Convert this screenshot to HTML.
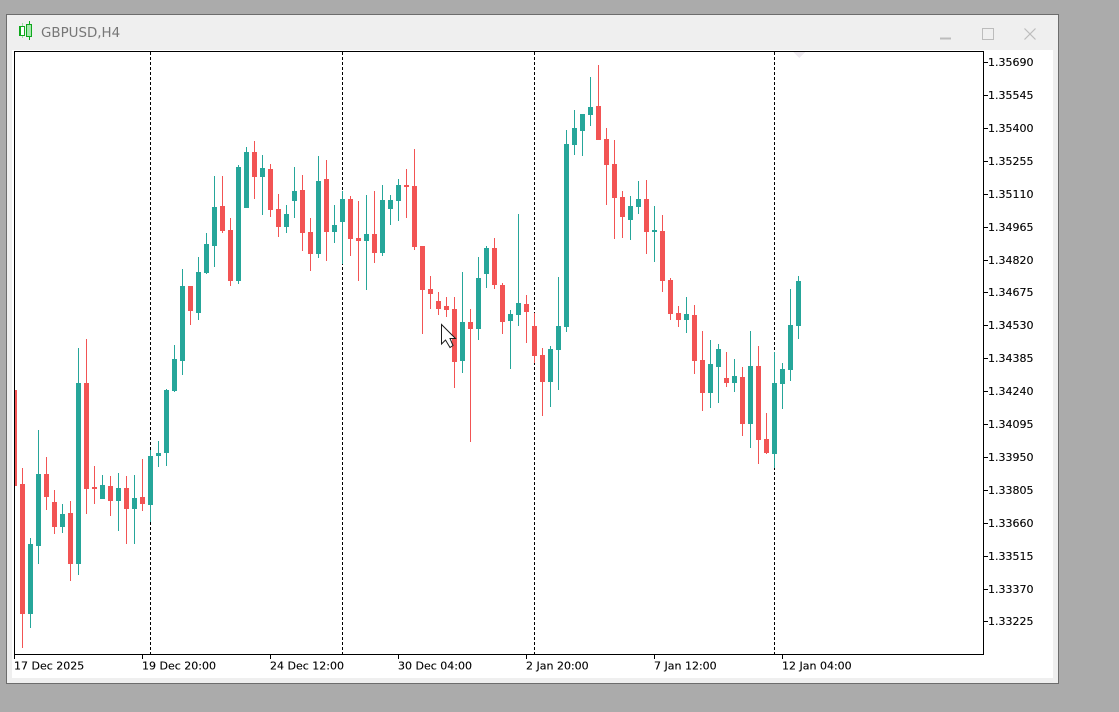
<!DOCTYPE html>
<html><head><meta charset="utf-8"><title>GBPUSD,H4</title>
<style>
html,body{margin:0;padding:0;width:1119px;height:712px;overflow:hidden;background:#ababab}
svg{display:block}
text{font-family:"DejaVu Sans","Liberation Sans",sans-serif;font-size:11px;fill:#000;stroke:#000;stroke-width:.12px}
</style></head><body>
<svg width="1119" height="712" viewBox="0 0 1119 712" xmlns="http://www.w3.org/2000/svg" shape-rendering="crispEdges">
<rect width="1119" height="712" fill="#ababab"/>
<rect x="6.5" y="14.5" width="1052" height="669" fill="#efefef" stroke="#6d6d6d"/>
<rect x="12" y="50" width="1041" height="628" fill="#fff"/>
<path d="M22.5 23V38" stroke="#9fdca6" fill="none"/>
<rect x="19.5" y="26.5" width="5" height="9" fill="#fff" stroke="#0fa81d"/>
<rect x="20" y="27" width="1" height="8" fill="#0fa81d"/>
<path d="M29.5 21V40" stroke="#0fa81d" fill="none"/>
<rect x="26.5" y="24.5" width="5" height="12" fill="#a5e8ad" stroke="#0fa81d"/>
<g shape-rendering="auto">
<text x="41" y="37" style="font-size:13.4px;fill:#777;stroke:none">GBPUSD,H4</text>
</g>
<path d="M940 38.5H951" stroke="#bcbcbc" stroke-width="2"/>
<rect x="982.5" y="28.5" width="11" height="11" fill="none" stroke="#bcbcbc"/>
<path d="M1024.5 28.5L1035.5 39.5M1035.5 28.5L1024.5 39.5" stroke="#bcbcbc" stroke-width="1.2" fill="none" shape-rendering="auto"/>
<path d="M793 52H805L799 58Z" fill="#eeeaf0"/>
<path d="M150.5 52V654M342.5 52V654M534.5 52V654M774.5 52V654" stroke="#000" stroke-dasharray="3 2" fill="none"/>
<path fill="none" stroke="#f25454" stroke-width="1" d="M22.5 468V648M46.5 457V510M54.5 490V534M70.5 501V581M86.5 339V514M94.5 466V504M110.5 476V516M126.5 476V544M142.5 459V511M190.5 286V325M222.5 176V233M230.5 218V286M254.5 141V199M270.5 164V217M278.5 194V237M302.5 175V251M310.5 218V271M326.5 160V261M350.5 196V256M358.5 201V281M374.5 191V263M406.5 169V218M414.5 149V250M422.5 246V334M430.5 276V309M438.5 292V315M446.5 297V317M454.5 297V388M470.5 309V442M494.5 238V289M502.5 283V334M526.5 295V343M534.5 313V363M542.5 348V416M598.5 65V140M606.5 128V205M614.5 140V239M622.5 191V238M646.5 180V254M662.5 215V292M670.5 278V320M678.5 306V327M694.5 305V374M702.5 331V411M726.5 352V387M742.5 367V436M758.5 346V464M766.5 413V454"/>
<path fill="none" stroke="#f25454" stroke-width="5" d="M22.5 484V614M46.5 474V497M54.5 502V527M70.5 513V564M86.5 383V489M94.5 487V489M110.5 486V501M126.5 488V509M142.5 497V504M190.5 286V311M222.5 206V231M230.5 230V281M254.5 152V177M270.5 169V210M278.5 209V227M302.5 190V233M310.5 232V254M326.5 179V232M350.5 199V239M358.5 238V241M374.5 234V253M406.5 185V187M414.5 186V247M422.5 246V290M430.5 289V294M438.5 301V309M446.5 306V310M454.5 309V362M470.5 322V329M494.5 248V285M502.5 285V322M526.5 304V312M534.5 326V356M542.5 355V382M598.5 106V140M606.5 139V165M614.5 164V198M622.5 197V217M646.5 199V232M662.5 231V281M670.5 280V314M678.5 313V320M694.5 315V361M702.5 360V393M726.5 378V383M742.5 377V424M758.5 366V440M766.5 439V453"/>
<rect x="15" y="390" width="2" height="96" fill="#f25454"/>
<path fill="none" stroke="#26a69a" stroke-width="1" d="M30.5 538V628M38.5 430V564M62.5 504V533M78.5 348V575M102.5 475V499M118.5 473V531M134.5 475V544M150.5 450V522M158.5 441V467M166.5 389V466M174.5 345V392M182.5 269V375M198.5 257V320M206.5 233V274M214.5 176V267M238.5 165V284M246.5 147V208M262.5 155V215M286.5 205V233M294.5 167V218M318.5 156V258M334.5 205V243M342.5 191V264M366.5 195V290M382.5 185V256M390.5 195V225M398.5 179V221M462.5 272V373M478.5 257V340M486.5 246V288M510.5 310V369M518.5 214V326M550.5 346V407M558.5 277V390M566.5 130V332M574.5 110V155M582.5 114V156M590.5 77V126M630.5 196V240M638.5 181V214M654.5 206V262M686.5 297V333M710.5 340V408M718.5 344V403M734.5 359V392M750.5 331V448M774.5 352V468M782.5 363V409M790.5 289V381M798.5 276V339"/>
<path fill="none" stroke="#26a69a" stroke-width="5" d="M30.5 544V614M38.5 474V546M62.5 514V527M78.5 383V564M102.5 485V499M118.5 488V501M134.5 498V509M150.5 456V505M158.5 453V456M166.5 390V453M174.5 359V391M182.5 286V361M198.5 272V313M206.5 244V273M214.5 207V246M238.5 167V281M246.5 152V208M262.5 168V177M286.5 214V227M294.5 191V201M318.5 181V254M334.5 225V232M342.5 199V222M366.5 234V241M382.5 200V253M390.5 200V209M398.5 185V201M462.5 322V361M478.5 278V329M486.5 248V274M510.5 314V321M518.5 303V315M550.5 349V382M558.5 326V350M566.5 144V327M574.5 128V145M582.5 114V131M590.5 107V115M630.5 206V220M638.5 199V207M654.5 230V232M686.5 314V320M710.5 364V393M718.5 349V367M734.5 376V383M750.5 366V424M774.5 383V454M782.5 369V384M790.5 325V370M798.5 281V326"/>
<path d="M441.5 324.5V344L445.5 340L450 347.5L453 345.5L450 338.5H455.5Z" fill="#fff" stroke="#1c1c1c" shape-rendering="auto"/>
<rect x="14.5" y="51.5" width="969" height="603" fill="none" stroke="#000"/>
<path stroke="#000" fill="none" d="M984 62.5H988M984 95.5H988M984 128.5H988M984 161.5H988M984 194.5H988M984 227.5H988M984 260.5H988M984 292.5H988M984 325.5H988M984 358.5H988M984 391.5H988M984 424.5H988M984 457.5H988M984 490.5H988M984 523.5H988M984 556.5H988M984 589.5H988M984 621.5H988M14.5 655V659M142.5 655V659M270.5 655V659M398.5 655V659M526.5 655V659M654.5 655V659M782.5 655V659"/>
<g shape-rendering="auto">
<text x="988" y="66">1.35690</text>
<text x="988" y="99">1.35545</text>
<text x="988" y="132">1.35400</text>
<text x="988" y="165">1.35255</text>
<text x="988" y="198">1.35110</text>
<text x="988" y="231">1.34965</text>
<text x="988" y="264">1.34820</text>
<text x="988" y="296">1.34675</text>
<text x="988" y="329">1.34530</text>
<text x="988" y="362">1.34385</text>
<text x="988" y="395">1.34240</text>
<text x="988" y="428">1.34095</text>
<text x="988" y="461">1.33950</text>
<text x="988" y="494">1.33805</text>
<text x="988" y="527">1.33660</text>
<text x="988" y="560">1.33515</text>
<text x="988" y="593">1.33370</text>
<text x="988" y="625">1.33225</text>
<text x="14" y="669.5">17 Dec 2025</text>
<text x="142" y="669.5">19 Dec 20:00</text>
<text x="270" y="669.5">24 Dec 12:00</text>
<text x="398" y="669.5">30 Dec 04:00</text>
<text x="526" y="669.5">2 Jan 20:00</text>
<text x="654" y="669.5">7 Jan 12:00</text>
<text x="782" y="669.5">12 Jan 04:00</text>
</g>
</svg>
</body></html>
